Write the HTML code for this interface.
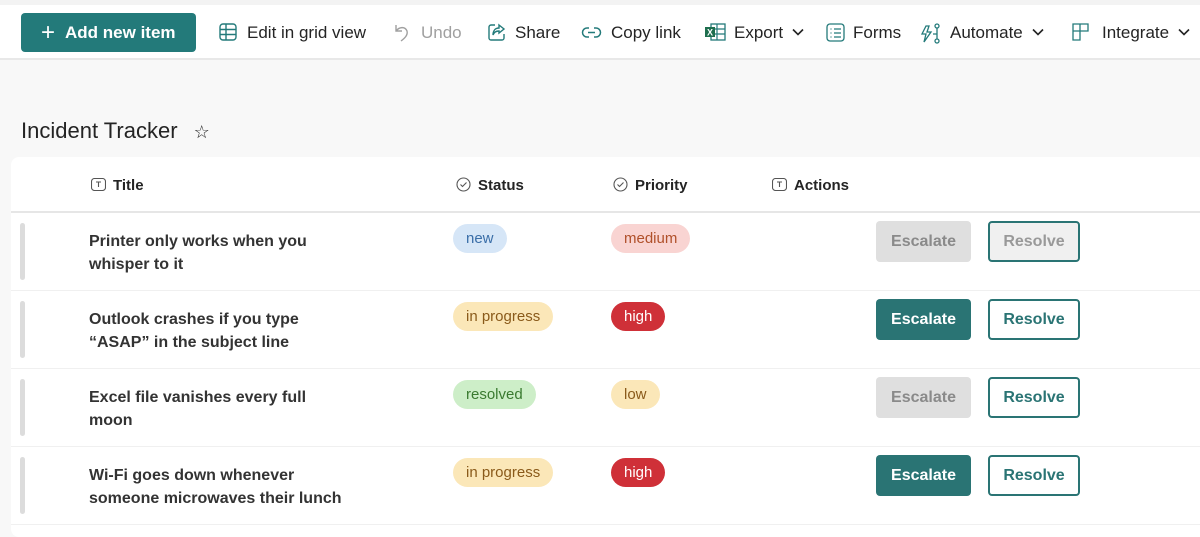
<!DOCTYPE html>
<html><head><meta charset="utf-8"><style>
*{box-sizing:border-box;margin:0;padding:0}
body{width:1200px;height:527px;overflow:hidden;background:#f8f8f8;font-family:"Liberation Sans",sans-serif;color:#242424;position:relative}
.tb{position:absolute;left:0;top:0;width:1200px;height:60px;background:#fff;border-bottom:2px solid #e8e8e8;border-top:5px solid #f3f3f3}
.add{position:absolute;left:21px;top:13px;width:175px;height:39px;background:#237a7a;border-radius:4px;color:#fff;font-size:17px;font-weight:bold;line-height:39px;padding-left:20px}
.add span{font-weight:normal;font-size:24px;vertical-align:-2px;margin-right:10px}
.it{position:absolute;top:22px;font-size:17px;color:#242424;line-height:22px;white-space:nowrap}
.it svg{position:absolute;left:0;top:1px}
h1{position:absolute;left:21px;top:118px;font-size:22px;font-weight:normal;color:#242424}
.card{position:absolute;left:11px;top:157px;width:1195px;height:380px;background:#fff;border-radius:8px}
.hd{position:absolute;top:177px;font-size:15px;font-weight:bold;color:#242424}
.hl{position:absolute;left:11px;top:211px;width:1189px;height:2px;background:#e6e6e6}
.row{position:absolute;left:11px;width:1189px;height:78px;border-bottom:1px solid #f0f0f0}
.bar{position:absolute;left:9px;top:10px;width:5px;height:57px;background:#dcdcdc;border-radius:3px}
.t{position:absolute;left:78px;top:17px;font-size:16px;font-weight:bold;line-height:23px;color:#333;white-space:nowrap}
.pill{position:absolute;top:11px;height:29px;line-height:29px;border-radius:15px;padding:0 13px;font-size:15px}
.btn{position:absolute;top:8px;height:41px;border-radius:4px;font-size:16px;font-weight:bold;text-align:center;line-height:41px}
.e{left:865px;width:95px}
.r{left:977px;width:92px;border:2px solid #2a7474;color:#2a7474;background:#fff;line-height:37px}
.ea{background:#2a7474;color:#fff}
.ed{background:#dfdfdf;color:#8a8a8a}
.rd{background:#f0f0f0;color:#999}
</style></head><body>
<div class="tb"></div>
<div class="add"><span>+</span>Add new item</div>
<div class="it" style="left:219px;padding-left:28px"><svg width="18" height="18" viewBox="0 0 18 18" fill="none" stroke="#237a7a" stroke-width="1.4"><rect x="1" y="1" width="16" height="16" rx="3"/><path d="M1 6.5h16M1 11.5h16M7 1v16"/></svg>Edit in grid view</div>
<div class="it" style="left:392px;padding-left:29px;color:#a0a0a0"><svg width="20" height="20" viewBox="0 0 20 20" fill="none" stroke="#a0a0a0" stroke-width="1.4"><path d="M4 2v6h6M4 8c3-4 9-5 11 0 1 4-2 7-6 10"/></svg>Undo</div>
<div class="it" style="left:487px;padding-left:28px"><svg width="19" height="19" viewBox="0 0 19 19" fill="none" stroke="#237a7a" stroke-width="1.4"><path d="M8 2H4a2 2 0 0 0-2 2v11a2 2 0 0 0 2 2h11a2 2 0 0 0 2-2v-4"/><path d="M12 2l5 4-5 4V8c-3 0-5 1-6 4 0-4 2-7 6-7z"/></svg>Share</div>
<div class="it" style="left:581px;padding-left:30px"><svg width="21" height="19" viewBox="0 0 21 19" fill="none" stroke="#237a7a" stroke-width="1.5"><path d="M8 5H6a4 4 0 0 0 0 9h2M13 5h2a4 4 0 0 1 0 9h-2M7 9.5h7"/></svg>Copy link</div>
<div class="it" style="left:704px;padding-left:30px"><svg width="22" height="18" viewBox="0 0 22 18"><rect x="7" y="1" width="14" height="16" fill="none" stroke="#237a7a" stroke-width="1.3"/><path d="M7 6h14M7 11h14M13 1v16" stroke="#237a7a" stroke-width="1.2"/><rect x="1" y="4" width="10" height="10" fill="#1e6e4e"/><text x="3" y="12.5" font-size="9" fill="#fff" font-weight="bold" font-family="Liberation Sans">X</text></svg>Export <svg style="position:static;margin-left:4px;vertical-align:2px" width="12" height="8" viewBox="0 0 12 8" fill="none" stroke="#242424" stroke-width="1.6"><path d="M1 1.5l5 5 5-5"/></svg></div>
<div class="it" style="left:826px;padding-left:27px"><svg width="19" height="19" viewBox="0 0 19 19" fill="none" stroke="#237a7a" stroke-width="1.3"><rect x="1" y="1" width="17" height="17" rx="3"/><path d="M8 6h7M8 10h7M8 14h7M4.5 6h1M4.5 10h1M4.5 14h1"/></svg>Forms</div>
<div class="it" style="left:920px;padding-left:30px"><svg width="22" height="21" viewBox="0 0 22 21" fill="none" stroke="#237a7a" stroke-width="1.3"><path d="M6 3L2 11h4l-2 8 7-10H7l2-6z"/><circle cx="17" cy="3" r="2"/><circle cx="17" cy="18" r="2"/><path d="M17 5v11M13 11h4"/></svg>Automate <svg style="position:static;margin-left:4px;vertical-align:2px" width="12" height="8" viewBox="0 0 12 8" fill="none" stroke="#242424" stroke-width="1.6"><path d="M1 1.5l5 5 5-5"/></svg></div>
<div class="it" style="left:1072px;padding-left:30px"><svg width="18" height="18" viewBox="0 0 18 18" fill="none" stroke="#237a7a" stroke-width="1.3"><path d="M1 1h7v7H1zM8 1h8v7H8M1 8v9h7V8"/></svg>Integrate <svg style="position:static;margin-left:4px;vertical-align:2px" width="12" height="8" viewBox="0 0 12 8" fill="none" stroke="#242424" stroke-width="1.6"><path d="M1 1.5l5 5 5-5"/></svg></div>

<h1>Incident Tracker <span style="font-size:18px;margin-left:10px">☆</span></h1>
<div class="card"></div>
<div class="hd" style="left:91px"><svg width="15" height="13" viewBox="0 0 15 13" style="margin-right:7px;vertical-align:-1px" fill="none" stroke="#555" stroke-width="1.1"><rect x=".5" y=".5" width="14" height="12" rx="3"/><path d="M5 4h5M7.5 4v5"/></svg>Title</div>
<div class="hd" style="left:456px"><svg width="15" height="15" viewBox="0 0 15 15" style="margin-right:7px;vertical-align:-2px" fill="none" stroke="#555" stroke-width="1.1"><circle cx="7.5" cy="7.5" r="6.5"/><path d="M4.5 7.5l2 2 4-4"/></svg>Status</div>
<div class="hd" style="left:613px"><svg width="15" height="15" viewBox="0 0 15 15" style="margin-right:7px;vertical-align:-2px" fill="none" stroke="#555" stroke-width="1.1"><circle cx="7.5" cy="7.5" r="6.5"/><path d="M4.5 7.5l2 2 4-4"/></svg>Priority</div>
<div class="hd" style="left:772px"><svg width="15" height="13" viewBox="0 0 15 13" style="margin-right:7px;vertical-align:-1px" fill="none" stroke="#555" stroke-width="1.1"><rect x=".5" y=".5" width="14" height="12" rx="3"/><path d="M5 4h5M7.5 4v5"/></svg>Actions</div>
<div class="hl"></div>

<div class="row" style="top:213px"><div class="bar"></div><div class="t">Printer only works when you<br>whisper to it</div>
<div class="pill" style="left:442px;background:#d6e6f7;color:#3a6ea8">new</div>
<div class="pill" style="left:600px;background:#f9d4d2;color:#b0502a">medium</div>
<div class="btn e ed">Escalate</div><div class="btn r rd">Resolve</div></div>

<div class="row" style="top:291px"><div class="bar"></div><div class="t">Outlook crashes if you type<br>“ASAP” in the subject line</div>
<div class="pill" style="left:442px;background:#fbe7b8;color:#8a5a1a">in progress</div>
<div class="pill" style="left:600px;background:#cf3038;color:#fff">high</div>
<div class="btn e ea">Escalate</div><div class="btn r">Resolve</div></div>

<div class="row" style="top:369px"><div class="bar"></div><div class="t">Excel file vanishes every full<br>moon</div>
<div class="pill" style="left:442px;background:#cdeec8;color:#3a7a30">resolved</div>
<div class="pill" style="left:600px;background:#fbe7b8;color:#8a5a1a">low</div>
<div class="btn e ed">Escalate</div><div class="btn r">Resolve</div></div>

<div class="row" style="top:447px"><div class="bar"></div><div class="t">Wi-Fi goes down whenever<br>someone microwaves their lunch</div>
<div class="pill" style="left:442px;background:#fbe7b8;color:#8a5a1a">in progress</div>
<div class="pill" style="left:600px;background:#cf3038;color:#fff">high</div>
<div class="btn e ea">Escalate</div><div class="btn r">Resolve</div></div>
</body></html>
